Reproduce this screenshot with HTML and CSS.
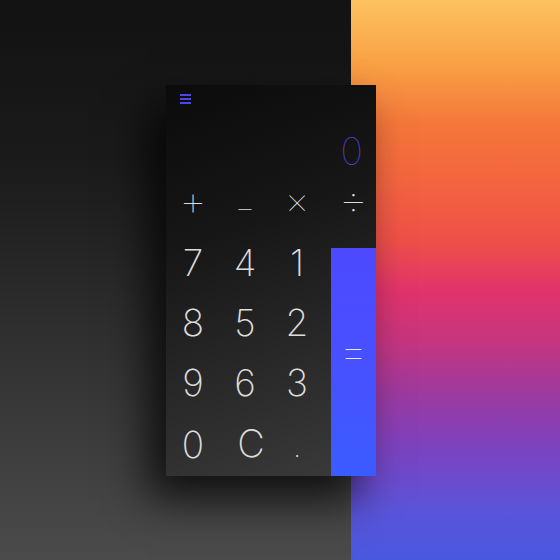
FILE: index.html
```html
<!DOCTYPE html>
<html>
<head>
<meta charset="utf-8">
<link rel="stylesheet" href="styles.css">
</head>
<body>
<div class="scene">
  <div class="bg-dark"></div>
  <div class="bg-warm"></div>
  <div class="calc">
    <div class="menu"><span></span><span></span><span></span></div>
    <div class="display">0</div>
    <div class="ops">
      <span class="key plus">+</span>
      <span class="key minus">−</span>
      <span class="key times">×</span>
      <span class="key divide">÷</span>
    </div>
    <div class="pad">
      <span class="key">7</span><span class="key">4</span><span class="key">1</span>
      <span class="key">8</span><span class="key">5</span><span class="key">2</span>
      <span class="key">9</span><span class="key">6</span><span class="key">3</span>
      <span class="key">0</span><span class="key clear">C</span><span class="key dot">.</span>
      <div class="equals">=</div>
    </div>
  </div>
</div>
</body>
</html>
```
FILE: styles.css
```css
html, body {
  margin: 0;
  padding: 0;
  width: 560px;
  height: 560px;
  overflow: hidden;
}
.scene {
  position: relative;
  display: flex;
  width: 560px;
  height: 560px;
  font-family: "Inter", "Roboto", "DejaVu Sans", sans-serif;
}
.bg-dark {
  width: 351px;
  background: linear-gradient(180deg, #121212 0%, #1b1b1b 30%, #333333 65%, #4b4b4b 100%);
}
.bg-warm {
  flex: 1;
  background: linear-gradient(180deg,
    #fdc15f 0%, #f9a245 11%, #f4773a 22%, #f3653f 32%, #ee5048 43%,
    #e1336b 52%, #c5357f 61%, #9a3aa2 71%, #7c42c0 80%, #5b54d9 91%, #4858e0 100%);
}
.calc {
  position: absolute;
  left: 166px;
  top: 85px;
  width: 210px;
  height: 391px;
  display: flex;
  flex-direction: column;
  background: linear-gradient(160deg, #0b0b0b 0%, #161616 35%, #2a2a2a 70%, #3b3b3b 100%);
  box-shadow: -18px 22px 40px rgba(0, 0, 0, 0.75);
  color: #dcdcdc;
}
.menu {
  display: flex;
  flex-direction: column;
  gap: 2px;
  padding: 9px 0 0 14px;
  height: 11px;
}
.menu span {
  display: block;
  width: 11px;
  height: 2px;
  background: #4c46e8;
}
.display {
  height: 72px;
  text-align: right;
  padding-right: 13px;
  font-size: 38px;
  font-weight: 130;
  line-height: 94px;
  color: #4d47dc;
}
.ops, .pad {
  display: grid;
  grid-template-columns: 52px 52px 52px 1fr;
  padding-left: 1px;
}
.ops {
  height: 56px;
  align-items: center;
}
.key {
  text-align: center;
  font-size: 37px;
  font-weight: 150;
  line-height: 1;
}
.ops .plus {
  font-size: 44px;
  font-weight: 100;
  padding-bottom: 8px;
}
.ops .minus {
  font-size: 32px;
  font-weight: 100;
  padding-top: 8px;
}
.ops .times {
  font-size: 38px;
  font-weight: 100;
  padding-bottom: 8px;
}
.ops .divide {
  margin-left: 8px;
  font-size: 46px;
  font-weight: 100;
  padding-bottom: 10px;
}
.pad {
  grid-template-rows: 60px 60px 60px 64px;
  align-items: center;
}
.pad .equals {
  grid-column: 4;
  grid-row: 1 / 5;
  align-self: stretch;
  margin: 16px 0 0 8px;
  background: linear-gradient(180deg, #4d49ff 0%, #4652ff 60%, #3a5cff 100%);
  display: flex;
  align-items: center;
  justify-content: center;
  font-size: 46px;
  font-weight: 100;
  color: #e8e8ff;
  padding-bottom: 24px;
}
.pad .clear {
  font-size: 38px;
  padding-left: 12px;
  padding-bottom: 2px;
}
.pad .dot {
  font-size: 26px;
  padding-top: 8px;
}
```
